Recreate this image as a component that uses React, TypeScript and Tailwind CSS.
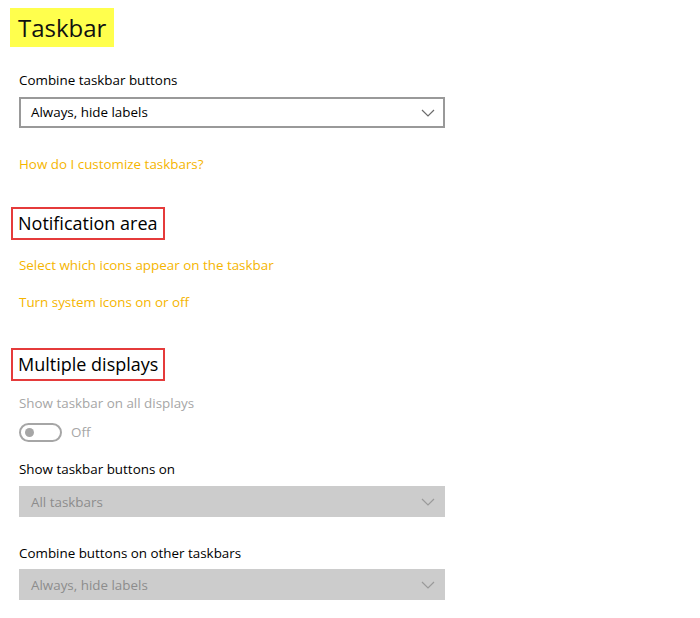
import React from "react";

const Chevron: React.FC<{ color: string }> = ({ color }) => (
  <svg width="14" height="8" viewBox="0 0 14 8" fill="none">
    <path d="M1 1l6 6 6-6" stroke={color} strokeWidth={1.2} />
  </svg>
);

const Select: React.FC<{ value: string; disabled?: boolean }> = ({
  value,
  disabled,
}) =>
  disabled ? (
    <div className="w-[426px] h-[31px] bg-[#cccccc] flex items-center justify-between pl-[12px] pr-[10px] text-[13.4px] text-[#8c8c8c]">
      <span>{value}</span>
      <Chevron color="#9a9a9a" />
    </div>
  ) : (
    <div className="w-[426px] h-[31px] border-2 border-[#999999] bg-white flex items-center justify-between pl-[10px] pr-[8px] text-[13.4px] text-black">
      <span>{value}</span>
      <Chevron color="#6b6b6b" />
    </div>
  );

const Heading: React.FC<{ children: React.ReactNode }> = ({ children }) => (
  <div className="ml-[-8px] inline-flex h-[33px] items-center border-2 border-[#e53b3b] px-[5px] text-[18px] text-black self-start">
    {children}
  </div>
);

const Link: React.FC<{ children: React.ReactNode }> = ({ children }) => (
  <div className="h-[20px] flex items-center text-[13.4px] text-[#f5b500]">
    {children}
  </div>
);

export default function App() {
  return (
    <div
      className="w-[700px] h-[618px] bg-white pl-[19px] flex flex-col"
      style={{ fontFamily: '"Open Sans", "Noto Sans", sans-serif' }}
    >
      <div className="mt-[8px] ml-[-9px] self-start h-[39px] bg-[#ffff4d] px-[8px] flex items-center text-[24px] text-[#111]">
        Taskbar
      </div>

      <div className="mt-[23px] h-[20px] flex items-center text-[13.4px] text-black">
        Combine taskbar buttons
      </div>
      <div className="mt-[7px]">
        <Select value="Always, hide labels" />
      </div>

      <div className="mt-[26px]">
        <Link>How do I customize taskbars?</Link>
      </div>

      <div className="mt-[33px] flex flex-col">
        <Heading>Notification area</Heading>
      </div>

      <div className="mt-[15px]">
        <Link>Select which icons appear on the taskbar</Link>
      </div>
      <div className="mt-[17px]">
        <Link>Turn system icons on or off</Link>
      </div>

      <div className="mt-[36px] flex flex-col">
        <Heading>Multiple displays</Heading>
      </div>

      <div className="mt-[12px] h-[20px] flex items-center text-[13.4px] text-[#a6a6a6]">
        Show taskbar on all displays
      </div>
      <div className="mt-[9px] flex items-center gap-[9px]">
        <div className="w-[43px] h-[19px] rounded-full border-2 border-[#a6a6a6] flex items-center pl-[4px]">
          <div className="w-[9px] h-[9px] rounded-full bg-[#a6a6a6]" />
        </div>
        <span className="text-[13.4px] text-[#a6a6a6]">Off</span>
      </div>

      <div className="mt-[17px] h-[20px] flex items-center text-[13.4px] text-black">
        Show taskbar buttons on
      </div>
      <div className="mt-[7px]">
        <Select value="All taskbars" disabled />
      </div>

      <div className="mt-[26px] h-[20px] flex items-center text-[13.4px] text-black">
        Combine buttons on other taskbars
      </div>
      <div className="mt-[6px]">
        <Select value="Always, hide labels" disabled />
      </div>
    </div>
  );
}
